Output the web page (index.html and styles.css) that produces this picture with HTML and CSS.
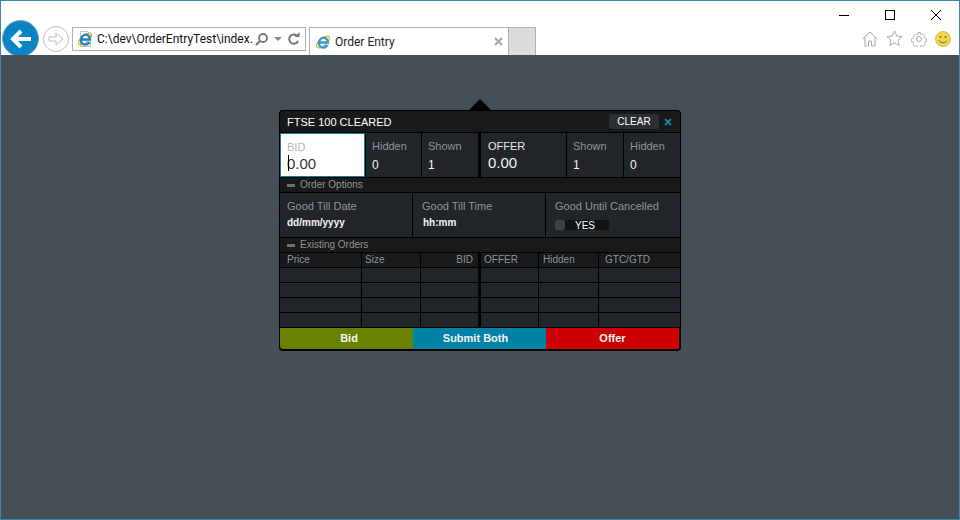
FILE: index.html
```html
<!DOCTYPE html>
<html lang="en">
<head>
    <meta charset="UTF-8">
    <title>Order Entry</title>
    <link rel="stylesheet" href="styles.css">
</head>
<body>
<div class="window">
    <div class="chrome">
        <div class="caption">
            <svg class="cap-icon" width="12" height="12" viewBox="0 0 12 12"><path d="M1 6.500h10" stroke="#000" fill="none"/></svg>
            <svg class="cap-icon" width="12" height="12" viewBox="0 0 12 12"><rect x="1.500" y="1.500" width="9" height="9" stroke="#000" fill="none"/></svg>
            <svg class="cap-icon" width="12" height="12" viewBox="0 0 12 12"><path d="M1 1l10 10M11 1L1 11" stroke="#000" fill="none"/></svg>
        </div>
        <div class="toolbar">
            <div class="back">
                <svg width="26" height="26" viewBox="0 0 26 26"><path d="M23 13H6M13 5l-8 8 8 8" stroke="#fff" stroke-width="4" fill="none"/></svg>
            </div>
            <div class="forward">
                <svg width="18" height="18" viewBox="0 0 18 18"><path d="M2 7h7V3l7 6-7 6v-4H2z" stroke="#bdbdbd" fill="none"/></svg>
            </div>
            <div class="address">
                <svg class="ie" width="16" height="16" viewBox="0 0 16 16">
                    <path d="M3.500 15.500V.5h7l3 3v12z" stroke="#c4c4c4" fill="#fff"/>
                    <ellipse cx="8" cy="8" rx="8" ry="3.600" transform="rotate(-40 8 8)" stroke="#f0b020" stroke-width="1.400" fill="none"/>
                    <path d="M3 8.500h10C13 4.500 9.500 3 7 4 4 5.200 3 9.500 4.700 12 7 14.500 11 14 12.500 11" stroke="#1c86cc" stroke-width="2.400" fill="none"/>
                </svg>
                <span class="url">C:\dev\OrderEntryTest\index.</span>
                <svg class="search" width="15" height="15" viewBox="0 0 15 15"><circle cx="9" cy="6" r="4" stroke="#777" stroke-width="1.800" fill="none"/><path d="M6 9l-4 4" stroke="#777" stroke-width="2.200"/></svg>
                <svg class="caret" width="8" height="4" viewBox="0 0 8 4"><path d="M0 0h8L4 4z" fill="#888"/></svg>
                <svg class="reload" width="13" height="14" viewBox="0 0 13 14"><path d="M10.500 4.500A4.600 4.600 0 1 0 11 9" stroke="#777" stroke-width="2" fill="none"/><path d="M7.500 5h5V0z" fill="#777"/></svg>
            </div>
            <div class="tab">
                <svg class="ie" width="16" height="16" viewBox="0 0 16 16">
                    <ellipse cx="8" cy="8" rx="8" ry="3.600" transform="rotate(-40 8 8)" stroke="#f0b020" stroke-width="1.400" fill="none"/>
                    <path d="M3 8.500h10C13 4.500 9.500 3 7 4 4 5.200 3 9.500 4.700 12 7 14.500 11 14 12.500 11" stroke="#3a9ad9" stroke-width="2.400" fill="none"/>
                </svg>
                <span class="tab-title">Order Entry</span>
                <svg width="9" height="9" viewBox="0 0 9 9"><path d="M1 1l7 7M8 1L1 8" stroke="#a8a8a8" stroke-width="2" fill="none"/></svg>
            </div>
            <div class="new-tab"></div>
            <div class="tools">
                <svg width="16" height="16" viewBox="0 0 16 16"><path d="M.5 8L8 1l7.500 7M3 6.500v8.500h3.500v-5h3v5H13V6.500" stroke="#a9a9a9" fill="none"/></svg>
                <svg width="17" height="17" viewBox="0 0 17 17"><path d="M8.500 1l2.300 5 5.200.6-3.900 3.500 1.100 5.400-4.700-2.700-4.700 2.700 1.100-5.400L1 6.600 6.200 6z" stroke="#a9a9a9" fill="none"/></svg>
                <svg width="16" height="16" viewBox="0 0 16 16"><circle cx="8" cy="8" r="2.500" stroke="#a9a9a9" fill="none"/><path d="M6.500.5h3l.4 2 1.600.7 1.700-1.100 2.100 2.100-1.100 1.700.7 1.600 2 .4v3l-2 .4-.7 1.600 1.100 1.700-2.100 2.100-1.700-1.100-1.600.7-.4 2h-3l-.4-2-1.600-.7-1.700 1.100-2.100-2.100 1.100-1.700-.7-1.600-2-.4v-3l2-.4.7-1.600L1.700 4.300l2.100-2.100 1.700 1.100 1.600-.7z" transform="translate(1.100 1.100) scale(.86)" stroke="#a9a9a9" fill="none"/></svg>
                <svg width="16" height="16" viewBox="0 0 16 16"><circle cx="8" cy="8" r="7.500" fill="#f2d652" stroke="#d8bd55"/><circle cx="5.500" cy="6" r="1" fill="#7a6a20"/><circle cx="10.500" cy="6" r="1" fill="#7a6a20"/><path d="M4 9.500c1.500 3 6.500 3 8 0" stroke="#7a6a20" fill="none"/></svg>
            </div>
        </div>
    </div>
    <div class="page">
        <div class="panel">
            <div class="panel-head">
                <span class="panel-title">FTSE 100 CLEARED</span>
                <span class="clear-btn">CLEAR</span>
                <svg class="close-x" width="8" height="8" viewBox="0 0 8 8"><path d="M1 1l6 6M7 1L1 7" stroke="#1c7f9e" stroke-width="2" fill="none"/></svg>
            </div>
            <div class="quote-row">
                <div class="quote-cell bid-input">
                    <div class="cell-label">BID</div>
                    <div class="cell-price"><span class="caret-bar"></span>0.00</div>
                </div>
                <div class="quote-cell"><div class="cell-label">Hidden</div><div class="cell-size">0</div></div>
                <div class="quote-cell"><div class="cell-label">Shown</div><div class="cell-size">1</div></div>
                <div class="quote-gap"></div>
                <div class="quote-cell offer-cell"><div class="cell-label offer-label">OFFER</div><div class="cell-price">0.00</div></div>
                <div class="quote-cell"><div class="cell-label">Shown</div><div class="cell-size">1</div></div>
                <div class="quote-cell"><div class="cell-label">Hidden</div><div class="cell-size">0</div></div>
            </div>
            <div class="section-bar"><span class="dash"></span>Order Options</div>
            <div class="options-row">
                <div class="option"><div class="option-label">Good Till Date</div><div class="option-value">dd/mm/yyyy</div></div>
                <div class="option"><div class="option-label">Good Till Time</div><div class="option-value time-value">hh:mm</div></div>
                <div class="option">
                    <div class="option-label">Good Until Cancelled</div>
                    <div class="toggle"><span class="knob"></span><span class="toggle-text">YES</span></div>
                </div>
            </div>
            <div class="section-bar"><span class="dash"></span>Existing Orders</div>
            <div class="orders">
                <div class="orders-row orders-head">
                    <div>Price</div><div>Size</div><div class="right">BID</div><div>OFFER</div><div>Hidden</div><div>GTC/GTD</div>
                </div>
                <div class="orders-row"><div></div><div></div><div></div><div></div><div></div><div></div></div>
                <div class="orders-row"><div></div><div></div><div></div><div></div><div></div><div></div></div>
                <div class="orders-row"><div></div><div></div><div></div><div></div><div></div><div></div></div>
                <div class="orders-row"><div></div><div></div><div></div><div></div><div></div><div></div></div>
            </div>
            <div class="actions">
                <div class="action bid">Bid</div>
                <div class="action both">Submit Both</div>
                <div class="action offer">Offer</div>
            </div>
        </div>
    </div>
</div>
</body>
</html>
```

FILE: styles.css
```css
* {
    box-sizing: border-box;
}

body {
    margin: 0;
    font-family: "Liberation Sans", Arial, sans-serif;
}

.window {
    width: 960px;
    height: 520px;
    border: 1px solid #3c87a6;
    display: flex;
    flex-direction: column;
    overflow: hidden;
}

.chrome {
    height: 54px;
    background-color: #fff;
}

.caption {
    height: 26px;
    display: flex;
    justify-content: flex-end;
    align-items: center;
    gap: 34px;
    padding: 2px 17px 0 0;
}

.toolbar {
    height: 28px;
    display: flex;
    align-items: flex-end;
}

.back {
    width: 37px;
    height: 37px;
    margin: 0 0 -2px 1px;
    border-radius: 50%;
    background-color: #0a84c4;
    border: 1px solid #8aa;
    display: flex;
    align-items: center;
    justify-content: center;
}

.forward {
    width: 26px;
    height: 26px;
    margin: 0 0 3px 4px;
    border: 1px solid #bdbdbd;
    border-radius: 50%;
    display: flex;
    align-items: center;
    justify-content: center;
}

.address {
    width: 234px;
    height: 24px;
    margin: 0 0 4px 3px;
    border: 1px solid #b0b0b0;
    display: flex;
    align-items: center;
    padding-left: 4px;
}

.url {
    width: 155px;
    margin: 0 2px 0 4px;
    font: 12px Roboto, sans-serif;
    color: #111;
    white-space: nowrap;
}

.caret {
    margin: 0 5px;
}

.tab {
    width: 200px;
    height: 28px;
    margin-left: 3px;
    border: 1px solid #b0b0b0;
    border-bottom: none;
    display: flex;
    align-items: center;
    padding: 0 5px 0 5px;
}

.tab-title {
    flex: 1;
    margin-left: 4px;
    font: 12px Roboto, sans-serif;
    color: #222;
}

.new-tab {
    width: 27px;
    height: 28px;
    background-color: #dcdcdc;
    border: 1px solid #b0b0b0;
    border-width: 1px 1px 0 0;
}

.tools {
    margin-left: auto;
    display: flex;
    align-items: center;
    gap: 8px;
    padding: 0 8px 8px 0;
}

.page {
    flex: 1;
    background-color: #464e56;
    display: flex;
    justify-content: center;
    padding-top: 55px;
}

.panel {
    width: 402px;
    height: 241px;
    background-color: #000;
    border: 1px solid #000;
    border-bottom-width: 2px;
    border-radius: 4px;
    position: relative;
}

.panel::before {
    content: "";
    position: absolute;
    top: -12px;
    left: 189px;
    border: 11px solid transparent;
    border-top: none;
    border-bottom-color: #050506;
}

.panel-head {
    height: 21px;
    background-color: #17191b;
    border-radius: 3px 3px 0 0;
    display: flex;
    align-items: center;
    padding: 0 8px 0 7px;
}

.panel-title {
    flex: 1;
    font-size: 11px;
    color: #fff;
}

.clear-btn {
    width: 50px;
    height: 15px;
    line-height: 15px;
    text-align: center;
    background-color: #2b2f35;
    border-radius: 2px;
    font-size: 10px;
    color: #fff;
    margin-right: 5px;
}

.quote-row {
    height: 44px;
    margin-top: 1px;
    display: grid;
    grid-template-columns: 85px 55px 56px 1px 85px 56px 56px;
    column-gap: 1px;
}

.quote-cell {
    background-color: #212529;
    padding: 7px 0 0 6px;
}

.offer-cell {
    padding-left: 7px;
}

.quote-gap {
    background-color: #000;
}

.bid-input {
    background-color: #fff;
    border: 1px solid #0e7f9f;
    position: relative;
}

.bid-input .cell-label {
    color: #b5b5b5;
}

.bid-input .cell-price {
    color: #333;
}

.caret-bar {
    position: absolute;
    left: 7px;
    top: 21px;
    width: 1px;
    height: 16px;
    background-color: #000;
}

.cell-label {
    font-size: 11px;
    line-height: 13px;
    color: #8f9499;
}

.offer-label {
    color: #e8e8e8;
}

.cell-price {
    font-size: 15px;
    line-height: 19px;
    color: #f2f2f2;
}

.cell-size {
    font-size: 12px;
    line-height: 18px;
    margin-top: 3px;
    color: #f2f2f2;
}

.section-bar {
    height: 14px;
    margin-top: 1px;
    background-color: #17191b;
    font-size: 10px;
    line-height: 14px;
    color: #8f9499;
    display: flex;
    align-items: center;
    padding-left: 7px;
}

.dash {
    width: 8px;
    height: 3px;
    margin-right: 5px;
    background-color: #6b7076;
}

.options-row {
    height: 44px;
    margin-top: 1px;
    display: grid;
    grid-template-columns: 132px 132px 1fr;
    column-gap: 1px;
}

.option {
    background-color: #212529;
    padding: 7px 0 0 9px;
}

.option:first-child {
    padding-left: 7px;
}

.option-label {
    font-size: 11px;
    line-height: 13px;
    color: #8f9499;
}

.option-value {
    font-size: 10px;
    font-weight: bold;
    line-height: 13px;
    margin-top: 3px;
    color: #f4f4f4;
}

.time-value {
    margin-left: 1px;
}

.toggle {
    width: 54px;
    height: 10px;
    margin-top: 7px;
    background-color: #111315;
    display: flex;
    align-items: center;
}

.knob {
    width: 10px;
    height: 10px;
    background-color: #3c4148;
    border-radius: 2px;
}

.toggle-text {
    margin-left: 10px;
    font-size: 10px;
    color: #fff;
}

.orders {
    margin-top: 1px;
}

.orders-row {
    height: 14px;
    margin-bottom: 1px;
    display: grid;
    grid-template-columns: 81px 58px 57px 59px 59px 1fr;
    column-gap: 1px;
}

.orders-row > div {
    background-color: #212529;
}

.orders-row > div:nth-child(4) {
    margin-left: 2px;
}

.orders-head > div {
    background-color: #17191b;
    padding: 0 5px 0 7px;
    font-size: 10px;
    line-height: 14px;
    color: #8f9499;
}

.orders-head > div:nth-child(2),
.orders-head > div:nth-child(4) {
    padding-left: 3px;
}

.orders-head > div:nth-child(5) {
    padding-left: 4px;
}

.orders-head > div:nth-child(6) {
    padding-left: 6px;
}

.orders-head .right {
    text-align: right;
}

.actions {
    height: 21px;
    display: grid;
    grid-template-columns: 133px 133px 133px;
}

.action {
    font-size: 11px;
    font-weight: bold;
    line-height: 20px;
    text-align: center;
    color: #f4f4f4;
}

.action.bid {
    background-color: #688200;
    border-radius: 0 0 0 3px;
    padding-left: 5px;
}

.action.both {
    background-color: #0082a6;
    padding-right: 8px;
}

.action.offer {
    background-color: #cc0000;
}
```
